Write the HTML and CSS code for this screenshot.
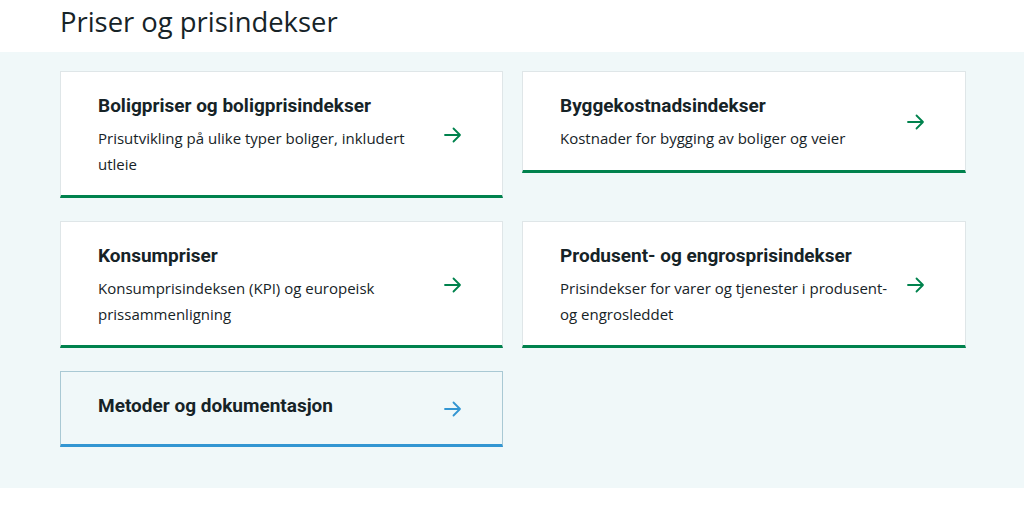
FILE: index.html
```html
<!DOCTYPE html>
<html lang="no">
<head>
<meta charset="utf-8">
<title>Priser og prisindekser</title>
<link rel="stylesheet" href="styles.css">
</head>
<body>
<header class="page-header">
  <h1 class="page-title">Priser og prisindekser</h1>
</header>
<section class="topics">
  <div class="grid">
    <a class="card" href="#">
      <div class="card-text">
        <h2 class="card-title">Boligpriser og boligprisindekser</h2>
        <p class="card-desc">Prisutvikling på ulike typer boliger, inkludert utleie</p>
      </div>
      <svg class="arrow" width="18" height="16" viewBox="0 0 18 16" aria-hidden="true"><path d="M1 8h15M9.5 1.5L16 8l-6.5 6.5" fill="none" stroke="currentColor" stroke-width="1.8" stroke-linecap="round" stroke-linejoin="round"/></svg>
    </a>
    <a class="card" href="#">
      <div class="card-text">
        <h2 class="card-title">Byggekostnadsindekser</h2>
        <p class="card-desc">Kostnader for bygging av boliger og veier</p>
      </div>
      <svg class="arrow" width="18" height="16" viewBox="0 0 18 16" aria-hidden="true"><path d="M1 8h15M9.5 1.5L16 8l-6.5 6.5" fill="none" stroke="currentColor" stroke-width="1.8" stroke-linecap="round" stroke-linejoin="round"/></svg>
    </a>
    <a class="card" href="#">
      <div class="card-text">
        <h2 class="card-title">Konsumpriser</h2>
        <p class="card-desc">Konsumprisindeksen (KPI) og europeisk prissammenligning</p>
      </div>
      <svg class="arrow" width="18" height="16" viewBox="0 0 18 16" aria-hidden="true"><path d="M1 8h15M9.5 1.5L16 8l-6.5 6.5" fill="none" stroke="currentColor" stroke-width="1.8" stroke-linecap="round" stroke-linejoin="round"/></svg>
    </a>
    <a class="card" href="#">
      <div class="card-text">
        <h2 class="card-title">Produsent- og engrosprisindekser</h2>
        <p class="card-desc">Prisindekser for varer og tjenester i produsent- og engrosleddet</p>
      </div>
      <svg class="arrow" width="18" height="16" viewBox="0 0 18 16" aria-hidden="true"><path d="M1 8h15M9.5 1.5L16 8l-6.5 6.5" fill="none" stroke="currentColor" stroke-width="1.8" stroke-linecap="round" stroke-linejoin="round"/></svg>
    </a>
    <a class="card card-alt" href="#">
      <div class="card-text">
        <h2 class="card-title">Metoder og dokumentasjon</h2>
      </div>
      <svg class="arrow" width="18" height="16" viewBox="0 0 18 16" aria-hidden="true"><path d="M1 8h15M9.5 1.5L16 8l-6.5 6.5" fill="none" stroke="currentColor" stroke-width="1.8" stroke-linecap="round" stroke-linejoin="round"/></svg>
    </a>
  </div>
</section>
</body>
</html>
```
FILE: styles.css
```css
* { box-sizing: border-box; }
html, body { margin: 0; padding: 0; background: #ffffff; }
body {
  font-family: "Open Sans", "Noto Sans", sans-serif;
  color: #162327;
}
.page-header {
  padding: 3px 60px 11px;
}
.page-title {
  margin: 0;
  font-family: "Open Sans", sans-serif;
  font-weight: 400;
  font-size: 27.4px;
  line-height: 38px;
  color: #162327;
}
.topics {
  background: #f0f8f9;
  padding: 19px 58px 41px 60px;
}
.grid {
  display: grid;
  grid-template-columns: 443px 444px;
  column-gap: 19px;
  row-gap: 23px;
  align-items: start;
}
.card {
  display: flex;
  align-items: center;
  background: #ffffff;
  border: 1px solid #dfe6e8;
  border-bottom: 3px solid #00824d;
  padding: 20px 40px 18px 37px;
  text-decoration: none;
  color: #162327;
}
.card-text {
  flex: 1;
  min-width: 0;
  margin-right: 17px;
}
.card-title {
  margin: 0 0 6px;
  font-family: Roboto, "Liberation Sans", sans-serif;
  font-weight: 700;
  font-size: 19px;
  line-height: 28px;
  color: #162327;
}
.card-desc {
  margin: 0;
  font-family: "Open Sans", sans-serif;
  font-size: 15px;
  line-height: 25.5px;
  color: #162327;
}
.arrow {
  flex: none;
  color: #00824d;
}
.card-alt {
  background: #f0f8f9;
  border-color: #a9c9d4;
  border-bottom-color: #3396d2;
}
.card-alt .arrow {
  color: #3396d2;
}
```
